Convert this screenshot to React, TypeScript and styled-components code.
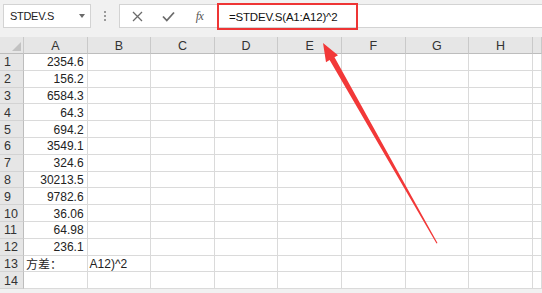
import { Fragment } from "react";
import styled, { createGlobalStyle } from "styled-components";

const GlobalStyle = createGlobalStyle`
  html, body {
    margin: 0;
    padding: 0;
    background: #ffffff;
    overflow: hidden;
  }
  * {
    box-sizing: border-box;
  }
`;

const COLS = ["A", "B", "C", "D", "E", "F", "G", "H", ""];
const VALUES = [
  "2354.6", "156.2", "6584.3", "64.3", "694.2", "3549.1", "324.6",
  "30213.5", "9782.6", "36.06", "64.98", "236.1",
];

const Page = styled.div`
  position: relative;
  width: 542px;
  height: 293px;
  overflow: hidden;
  font-family: "Liberation Sans", "Noto Sans CJK SC", sans-serif;
  color: #222;
  background: #f1f1f1;
`;

const Toolbar = styled.div`
  display: flex;
  align-items: flex-start;
  height: 37px;
  padding: 4px 0 0 3px;
  background: #f1f1f1;
`;

const NameBox = styled.div`
  display: flex;
  align-items: center;
  justify-content: space-between;
  width: 88px;
  height: 24px;
  padding: 0 5px 0 6px;
  background: #fff;
  border: 1px solid #d3d3d3;
  font-size: 11px;
  letter-spacing: -0.3px;
  color: #222;
`;

const Caret = styled.span`
  width: 0;
  height: 0;
  border-left: 3.5px solid transparent;
  border-right: 3.5px solid transparent;
  border-top: 4px solid #6a6a6a;
`;

const Grip = styled.div`
  width: 28px;
  height: 24px;
  display: flex;
  flex-direction: column;
  align-items: center;
  justify-content: center;
  gap: 2px;
`;

const Dot = styled.span`
  width: 2px;
  height: 2px;
  background: #9a9a9a;
`;

const FormulaField = styled.div`
  flex: 1;
  display: flex;
  align-items: flex-start;
  height: 24px;
  background: #fff;
  border: 1px solid #d3d3d3;
  border-right: none;
`;

const Buttons = styled.div`
  display: flex;
  align-items: center;
  width: 94px;
  height: 22px;
  padding-left: 9px;
  gap: 14px;
`;

const IconBtn = styled.span`
  width: 17px;
  height: 22px;
  display: flex;
  align-items: center;
  justify-content: center;
  color: #6b6b6b;
`;

const Fx = styled.span`
  font-family: "Liberation Serif", serif;
  font-style: italic;
  font-size: 12px;
  color: #555;
  letter-spacing: -0.5px;
`;

const Highlight = styled.div`
  margin: -2px 0 0 3px;
  width: 141px;
  height: 27px;
  border: 2.5px solid #ee3535;
  display: flex;
  align-items: center;
  padding-left: 10px;
  font-size: 11.5px;
  letter-spacing: -0.2px;
  color: #111;
`;

const Sheet = styled.div`
  display: grid;
  grid-template-columns: 24px repeat(8, 63.6px) 1fr;
  grid-template-rows: 17px repeat(14, 16.8px);
  background: #fff;
`;

const Corner = styled.div`
  position: relative;
  background: #e6e6e6;
  border-right: 1px solid #c9c9c9;
  border-bottom: 1px solid #bdbdbd;
  &::after {
    content: "";
    position: absolute;
    right: 2px;
    bottom: 2px;
    width: 0;
    height: 0;
    border-left: 9px solid transparent;
    border-bottom: 9px solid #c2c2c2;
  }
`;

const ColHead = styled.div`
  display: flex;
  align-items: center;
  justify-content: center;
  padding-top: 1px;
  background: #e6e6e6;
  border-right: 1px solid #c9c9c9;
  border-bottom: 1px solid #bdbdbd;
  font-size: 12.5px;
  color: #333;
`;

const RowHead = styled.div`
  display: flex;
  align-items: center;
  padding: 1px 0 0 4px;
  background: #e6e6e6;
  border-right: 1px solid #bdbdbd;
  border-bottom: 1px solid #d3d3d3;
  font-size: 12.5px;
  color: #333;
`;

const Cell = styled.div<{ $align?: "left" | "right" }>`
  display: flex;
  align-items: center;
  justify-content: ${({ $align }) => ($align === "right" ? "flex-end" : "flex-start")};
  padding: 1px 3px 0 2px;
  border-right: 1px solid #dadada;
  border-bottom: 1px solid #dadada;
  font-size: 12px;
  color: #222;
  white-space: nowrap;
`;

const Arrow = styled.svg`
  position: absolute;
  left: 0;
  top: 0;
  pointer-events: none;
`;

export default function App() {
  const rows = Array.from({ length: 14 }, (_, i) => i + 1);
  return (
    <>
      <GlobalStyle />
      <Page>
        <Toolbar>
          <NameBox>
            <span>STDEV.S</span>
            <Caret />
          </NameBox>
          <Grip>
            <Dot />
            <Dot />
            <Dot />
          </Grip>
          <FormulaField>
            <Buttons>
              <IconBtn>
                <svg width="11" height="11" viewBox="0 0 11 11">
                  <path d="M1 1 L10 10 M10 1 L1 10" stroke="#6b6b6b" strokeWidth="1.3" />
                </svg>
              </IconBtn>
              <IconBtn>
                <svg width="13" height="11" viewBox="0 0 13 11">
                  <path d="M1 5.5 L4.8 9.5 L12 1.5" stroke="#6b6b6b" strokeWidth="1.8" fill="none" />
                </svg>
              </IconBtn>
              <IconBtn>
                <Fx>fx</Fx>
              </IconBtn>
            </Buttons>
            <Highlight>=STDEV.S(A1:A12)^2</Highlight>
          </FormulaField>
        </Toolbar>
        <Sheet>
          <Corner />
          {COLS.map((c, i) => (
            <ColHead key={i}>{c}</ColHead>
          ))}
          {rows.map((r) => (
            <Fragment key={r}>
              <RowHead>{r}</RowHead>
              {COLS.map((_, ci) => {
                let text = "";
                let align: "left" | "right" = "left";
                if (ci === 0 && r <= 12) {
                  text = VALUES[r - 1];
                  align = "right";
                } else if (ci === 0 && r === 13) {
                  text = "方差：";
                } else if (ci === 1 && r === 13) {
                  text = "A12)^2";
                }
                return (
                  <Cell key={ci} $align={align}>
                    {text}
                  </Cell>
                );
              })}
            </Fragment>
          ))}
        </Sheet>
        <Arrow width="542" height="293" viewBox="0 0 542 293">
          <polygon
            points="323,43 338,55.2 334.5,57.3 437.5,243 436.5,243.4 329.6,60 326,62.3"
            fill="#f23838"
          />
        </Arrow>
      </Page>
    </>
  );
}
